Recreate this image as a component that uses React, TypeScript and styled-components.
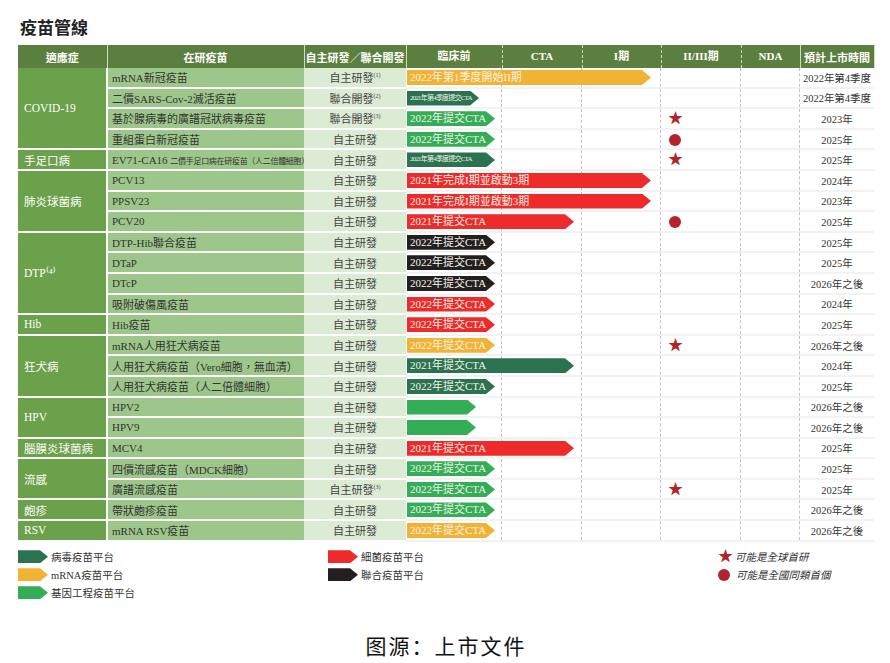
import styled, { createGlobalStyle } from 'styled-components'

const GlobalStyle = createGlobalStyle`
  body { margin: 0; background: #fff; }
`

const serif = `"Liberation Serif", "Noto Sans CJK TC", serif`

const Page = styled.div`
  width: 890px;
  height: 663px;
  padding: 14px 16px 0 18px;
  box-sizing: border-box;
  font-family: ${serif};
`

const Heading = styled.h1`
  margin: 0 0 6px 2px;
  font: bold 17px "Noto Sans CJK TC", sans-serif;
  color: #222;
`

const Table = styled.table`
  border-collapse: collapse;
  table-layout: fixed;
  width: 856px;
  font-size: 11px;
`

const Th = styled.th`
  background: #5b7f3e;
  color: #fff;
  height: 23px;
  font-weight: bold;
  font-size: 11px;
  border-right: 1px solid #cfdcc4;
  padding: 0;
  font-family: "Liberation Serif", "Noto Sans CJK TC", serif;
`

const Ind = styled.td`
  background: #6aa14a;
  color: #fff;
  padding: 0 6px;
  font-size: 11.5px;
  border-bottom: 2px solid #fff;
  vertical-align: middle;
`

const Name = styled.td`
  background: #9dc78a;
  color: #333;
  padding: 0 4px;
  font-size: 11px;
  border-bottom: 2px solid #fff;
  border-left: 2px solid #fff;
  white-space: nowrap;
  overflow: hidden;
`

const Small = styled.span`
  font-size: 8px;
  letter-spacing: -0.3px;
`

const Dev = styled.td`
  background: #dcebd4;
  color: #444;
  text-align: center;
  font-size: 11px;
  border-bottom: 2px solid #fff;
`

const Sup = styled.sup`
  font-size: 6px;
`

const Track = styled.td`
  position: relative;
  padding: 0;
  height: 18.6px;
  border-bottom: 2px solid #f2f2f2;
`

const Grid = styled.div`
  position: absolute;
  inset: 0;
  display: grid;
  grid-template-columns: 96px 80px 79px 80px 59px;
  div { border-right: 1px dashed #c4c4c4; }
`

const Bar = styled.div<{ $c: string; $w: number; $tiny?: boolean }>`
  position: absolute;
  left: 1px;
  top: 2px;
  height: 15px;
  width: ${p => p.$w}px;
  background: ${p => p.$c};
  clip-path: polygon(0 0, calc(100% - 9px) 0, 100% 50%, calc(100% - 9px) 100%, 0 100%);
  color: #f4f4e8;
  font-size: ${p => (p.$tiny ? '7px' : '11px')};
  line-height: 15px;
  padding-left: 3px;
  box-sizing: border-box;
  white-space: nowrap;
  overflow: hidden;
  letter-spacing: ${p => (p.$tiny ? '-0.8px' : '0')};
`

const Mark = styled.span`
  position: absolute;
  left: 262px;
  top: 1px;
  color: #b3232b;
  font-size: 15px;
  line-height: 17px;
`

const Dot = styled.span`
  position: absolute;
  left: 263px;
  top: 4px;
  width: 12px;
  height: 12px;
  border-radius: 50%;
  background: #b3232b;
`

const DateCell = styled.td`
  text-align: center;
  color: #333;
  font-size: 10.5px;
  white-space: nowrap;
  border-bottom: 2px solid #f2f2f2;
`

const Legend = styled.div`
  display: grid;
  grid-template-columns: 310px 390px 1fr;
  margin-top: 8px;
  font-size: 10.5px;
  color: #333;
`

const LegendCol = styled.div`
  display: flex;
  flex-direction: column;
  gap: 4px;
`

const LegendItem = styled.div`
  display: flex;
  align-items: center;
  gap: 3px;
  height: 14px;
`

const Swatch = styled.span<{ $c: string }>`
  width: 30px;
  height: 13px;
  background: ${p => p.$c};
  clip-path: polygon(0 0, 22px 0, 100% 50%, 22px 100%, 0 100%);
`

const Italic = styled.span`
  font-style: italic;
`

const Caption = styled.div`
  text-align: center;
  margin-top: 30px;
  font: 21px "Noto Sans CJK SC", serif;
  color: #111;
  letter-spacing: 2px;
`

const C = {
  dg: '#2a7250',
  or: '#f2b233',
  gr: '#33ad56',
  rd: '#ee2a2b',
  bk: '#231f20',
}

type Row = {
  ind?: [string, number]
  name: React.ReactNode
  dev: React.ReactNode
  bar: [string, number, string, boolean?]
  mark?: 'star' | 'dot'
  date: string
}

const own = '自主研發'
const rows: Row[] = [
  { ind: ['COVID-19', 4], name: 'mRNA新冠疫苗', dev: <>自主研發<Sup>(1)</Sup></>, bar: [C.or, 244, '2022年第1季度開始II期'], date: '2022年第4季度' },
  { name: '二價SARS-Cov-2滅活疫苗', dev: <>聯合開發<Sup>(2)</Sup></>, bar: [C.dg, 72, '2021年第4季度提交CTA', true], date: '2022年第4季度' },
  { name: '基於腺病毒的廣譜冠狀病毒疫苗', dev: <>聯合開發<Sup>(3)</Sup></>, bar: [C.gr, 88, '2022年提交CTA'], mark: 'star', date: '2023年' },
  { name: '重組蛋白新冠疫苗', dev: own, bar: [C.gr, 88, '2022年提交CTA'], mark: 'dot', date: '2025年' },
  { ind: ['手足口病', 1], name: <>EV71-CA16 <Small>二價手足口病在研疫苗（人二倍體細胞）</Small></>, dev: own, bar: [C.dg, 88, '2021年第4季度提交CTA', true], mark: 'star', date: '2025年' },
  { ind: ['肺炎球菌病', 3], name: 'PCV13', dev: own, bar: [C.rd, 244, '2021年完成I期並啟動3期'], date: '2024年' },
  { name: 'PPSV23', dev: own, bar: [C.rd, 244, '2021年完成I期並啟動3期'], date: '2023年' },
  { name: 'PCV20', dev: own, bar: [C.rd, 167, '2021年提交CTA'], mark: 'dot', date: '2025年' },
  { ind: ['DTP⁽⁴⁾', 4], name: 'DTP-Hib聯合疫苗', dev: own, bar: [C.bk, 88, '2022年提交CTA'], date: '2025年' },
  { name: 'DTaP', dev: own, bar: [C.bk, 88, '2022年提交CTA'], date: '2025年' },
  { name: 'DTcP', dev: own, bar: [C.bk, 88, '2022年提交CTA'], date: '2026年之後' },
  { name: '吸附破傷風疫苗', dev: own, bar: [C.rd, 88, '2022年提交CTA'], date: '2024年' },
  { ind: ['Hib', 1], name: 'Hib疫苗', dev: own, bar: [C.rd, 88, '2022年提交CTA'], date: '2025年' },
  { ind: ['狂犬病', 3], name: 'mRNA人用狂犬病疫苗', dev: own, bar: [C.or, 88, '2022年提交CTA'], mark: 'star', date: '2026年之後' },
  { name: '人用狂犬病疫苗（Vero細胞，無血清）', dev: own, bar: [C.dg, 167, '2021年提交CTA'], date: '2024年' },
  { name: '人用狂犬病疫苗（人二倍體細胞）', dev: own, bar: [C.dg, 88, '2022年提交CTA'], date: '2025年' },
  { ind: ['HPV', 2], name: 'HPV2', dev: own, bar: [C.gr, 69, ''], date: '2026年之後' },
  { name: 'HPV9', dev: own, bar: [C.gr, 69, ''], date: '2026年之後' },
  { ind: ['腦膜炎球菌病', 1], name: 'MCV4', dev: own, bar: [C.rd, 167, '2021年提交CTA'], date: '2025年' },
  { ind: ['流感', 2], name: '四價流感疫苗（MDCK細胞）', dev: own, bar: [C.gr, 88, '2022年提交CTA'], date: '2025年' },
  { name: '廣譜流感疫苗', dev: <>自主研發<Sup>(3)</Sup></>, bar: [C.gr, 88, '2022年提交CTA'], mark: 'star', date: '2025年' },
  { ind: ['皰疹', 1], name: '帶狀皰疹疫苗', dev: own, bar: [C.gr, 88, '2023年提交CTA'], date: '2026年之後' },
  { ind: ['RSV', 1], name: 'mRNA RSV疫苗', dev: own, bar: [C.or, 88, '2022年提交CTA'], date: '2026年之後' },
]

const PhaseHead = styled.div`
  display: grid;
  grid-template-columns: 96px 80px 79px 80px 59px;
  height: 23px;
  align-items: center;
  span {
    border-right: 1px dashed #cfdcc4;
    line-height: 23px;
  }
`

function Phases() {
  return (
    <PhaseHead>
      <span>臨床前</span><span>CTA</span><span>I期</span><span>II/III期</span><span>NDA</span>
    </PhaseHead>
  )
}

export default function App() {
  return (
    <Page>
      <GlobalStyle />
      <Heading>疫苗管線</Heading>
      <Table>
        <colgroup>
          <col style={{ width: 89 }} />
          <col style={{ width: 197 }} />
          <col style={{ width: 102 }} />
          <col style={{ width: 394 }} />
          <col style={{ width: 74 }} />
        </colgroup>
        <thead>
          <tr>
            <Th>適應症</Th>
            <Th>在研疫苗</Th>
            <Th>自主研發／聯合開發</Th>
            <Th><Phases /></Th>
            <Th>預計上市時間</Th>
          </tr>
        </thead>
        <tbody>
          {rows.map((r, i) => (
            <tr key={i}>
              {r.ind && <Ind rowSpan={r.ind[1]}>{r.ind[0]}</Ind>}
              <Name>{r.name}</Name>
              <Dev>{r.dev}</Dev>
              <Track>
                <Grid><div /><div /><div /><div /><div /></Grid>
                <Bar $c={r.bar[0]} $w={r.bar[1]} $tiny={r.bar[3]}>{r.bar[2]}</Bar>
                {r.mark === 'star' && <Mark>★</Mark>}
                {r.mark === 'dot' && <Dot />}
              </Track>
              <DateCell>{r.date}</DateCell>
            </tr>
          ))}
        </tbody>
      </Table>
      <Legend>
        <LegendCol>
          <LegendItem><Swatch $c={C.dg} />病毒疫苗平台</LegendItem>
          <LegendItem><Swatch $c={C.or} />mRNA疫苗平台</LegendItem>
          <LegendItem><Swatch $c={C.gr} />基因工程疫苗平台</LegendItem>
        </LegendCol>
        <LegendCol>
          <LegendItem><Swatch $c={C.rd} />細菌疫苗平台</LegendItem>
          <LegendItem><Swatch $c={C.bk} />聯合疫苗平台</LegendItem>
        </LegendCol>
        <LegendCol>
          <LegendItem><Mark as="span" style={{ position: 'static', width: 14 }}>★</Mark><Italic>可能是全球首研</Italic></LegendItem>
          <LegendItem><Dot as="span" style={{ position: 'static', marginRight: 3 }} /><Italic>可能是全國同類首個</Italic></LegendItem>
        </LegendCol>
      </Legend>
      <Caption>图源：上市文件</Caption>
    </Page>
  )
}
